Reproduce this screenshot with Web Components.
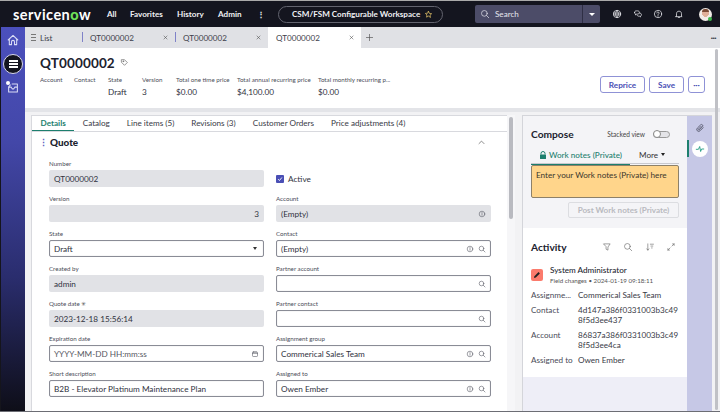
<!DOCTYPE html>
<html>
<head>
<meta charset="utf-8">
<style>
  html, body { margin: 0; padding: 0; width: 720px; height: 412px; overflow: hidden; background: #fff; }
  body { font-family: Lato, "Open Sans", sans-serif; color: #2b2d3a; }
</style>
</head>
<body>
<sn-app></sn-app>
<script>
const ICONS = {
  search: '<circle cx="7" cy="7" r="4.6"/><path d="M10.5 10.5 14 14"/>',
  info: '<circle cx="8" cy="8" r="5.6"/><path d="M8 7.4v3.2M8 5v.8"/>',
  cal: '<rect x="3" y="4" width="10" height="9" rx="1.5"/><path d="M3 6.8h10M6 3v2M10 3v2"/>',
  globe: '<circle cx="8" cy="8" r="5.8"/><path d="M2.4 6.5h11.2M2.4 9.5h11.2M8 2.2c-3 3.6-3 8 0 11.6M8 2.2c3 3.6 3 8 0 11.6"/>',
  chat: '<path d="M2.5 5.5c0-1.5 1-2.5 2.7-2.5h2.3c1.7 0 2.7 1 2.7 2.5S9.2 8 7.5 8H6L4 9.5V8C3 7.8 2.5 6.8 2.5 5.5Z"/><path d="M10.5 6.5c1.8 0 3 .9 3 2.6 0 1.2-.5 2-1.5 2.3v1.3L10.2 11.5H9c-1.3 0-2.3-.7-2.6-1.9"/>',
  help: '<circle cx="8" cy="8" r="5.8"/><path d="M6.2 6.4C6.3 5.3 7 4.8 8 4.8c1.1 0 1.8.7 1.8 1.6 0 1.5-1.8 1.4-1.8 3M8 10.8v.8"/>',
  bell: '<path d="M4 11.5V7.5c0-2.5 1.6-4 4-4s4 1.5 4 4v4l1 .7H3ZM6.8 13.5h2.4"/>',
  home: '<path d="M2.5 8 8 2.8 13.5 8M3.8 7v6.3H6.3V10c0-1 .7-1.600 1.700-1.600S9.700 9 9.700 10v3.300h2.500V7"/>',
  inbox: '<path d="M3 7h3l1 2h2l1-2h3M3 7v5.500h10V3.500H7"/><path d="M3 7 5 4.500"/>',
  tag: '<path d="M3 3h5l5 5-5 5-5-5Z"/><circle cx="5.800" cy="5.800" r=".8"/>',
  clip: '<path d="M13 7.500 8 12.500a3 3 0 0 1-4.300-4.300L9 3a2 2 0 0 1 2.900 2.900L6.800 11a.9.9 0 0 1-1.300-1.300L10 5.200"/>',
  filter: '<path d="M3 3h10L9.500 8v5l-3-1.500V8Z"/>',
  sort: '<path d="M4.500 3v10M2.800 11 4.500 13 6.200 11M8.500 3.500h5M9.500 6.500h3M10.500 9.500h1"/>',
  expand: '<path d="M9.500 6.500 13 3M10.500 3H13v2.500M6.500 9.500 3 13M3 10.500V13h2.500"/>',
  star: '<path d="m8 2.500 1.700 3.600 3.900.5-2.900 2.700.8 3.900L8 10.800l-3.500 1.900.8-3.900-2.900-2.700 3.900-.5Z"/>',
  chevUp: '<path d="M3.500 10 8 5.500 12.500 10"/>',
  plus: '<path d="M8 2.500v11M2.500 8h11"/>',
  close: '<path d="M4.500 4.500l7 7M11.500 4.500l-7 7"/>',
  pulse: '<path d="M2 8.500h3.500L7.500 4l1.500 8 1.500-4H14"/>'
};

function icon(name, size, color, sw) {
  return `<svg width="${size}" height="${size}" viewBox="0 0 16 16" fill="none" stroke="${color}" stroke-width="${sw || 1.2}" stroke-linecap="round" stroke-linejoin="round" style="display:block;flex:none">${ICONS[name]}</svg>`;
}

class SnTopbar extends HTMLElement {
  constructor() {
    super();
    this.attachShadow({mode: "open"}).innerHTML = `
      <style>
        :host { display: flex; align-items: center; height: 27px; background: #14151f; color: #f1f1f4; font-size: 8.100px; font-weight: 700; box-sizing: border-box; border-top: 1px solid #aaa; }
        .logo { margin-left: 13px; width: 94px; font-size: 14.500px; font-weight: 700; letter-spacing: .45px; color: #fff; }
        .logo b { color: #6ee05a; font-weight: 900; }
        nav { display: flex; width: 171px; }
        nav span:nth-child(1) { width: 23px; }
        nav span:nth-child(2) { width: 47px; }
        nav span:nth-child(3) { width: 41px; }
        nav span:nth-child(4) { width: 39px; }
        .pill { display: flex; align-items: center; box-sizing: border-box; width: 165px; height: 17px; padding-left: 13px; border: 1px solid #63646f; border-radius: 9px; font-size: 8.100px; margin-right: 32px; white-space: nowrap; }
        .pill svg { margin-left: 4px; }
        .search { display: flex; align-items: center; box-sizing: border-box; width: 125px; height: 18px; background: #4c4c68; border-radius: 2px; font-size: 8.100px; font-weight: 400; color: #e6e6ee; }
        .search .t { flex: 1; display: flex; align-items: center; gap: 5px; padding-left: 5px; }
        .search .c { width: 17px; height: 18px; border-left: 1px solid #2f2f45; display: flex; align-items: center; justify-content: center; }
        .caret { width: 0; height: 0; border: 3px solid transparent; border-top: 3.500px solid #fff; border-bottom: 0; }
        .icons { display: flex; align-items: center; margin-left: 12px; gap: 10.500px; }
        .avatar { position: relative; width: 13px; height: 13px; border-radius: 50%; margin-left: 5px; background: radial-gradient(circle at 50% 42%, #e0b09a 0 32%, #f1ece8 34% 100%); }
        .avatar::before { content: ""; position: absolute; left: 3px; top: 1px; width: 7px; height: 3px; border-radius: 3px 3px 0 0; background: #7a4a35; }
        .avatar::after { content: ""; position: absolute; right: 0; bottom: 0; width: 4px; height: 4px; border-radius: 50%; background: #3bb54a; }
      </style>
      <div class="logo">servicen<b>o</b>w</div>
      <nav><span>All</span><span>Favorites</span><span>History</span><span>Admin</span><span>&#8942;</span></nav>
      <div class="pill">CSM/FSM Configurable Workspace ${icon("star", 9, "#e5c46a", 1.300)}</div>
      <div class="search"><div class="t">${icon("search", 10, "#dcdce6")}Search</div><div class="c"><div class="caret"></div></div></div>
      <div class="icons">${icon("globe", 10, "#e8e8ee")}${icon("chat", 10, "#e8e8ee")}${icon("help", 10, "#e8e8ee")}${icon("bell", 10, "#e8e8ee")}<div class="avatar"></div></div>
    `;
  }
}

class SnSidebar extends HTMLElement {
  constructor() {
    super();
    this.attachShadow({mode: "open"}).innerHTML = `
      <style>
        :host { display: flex; flex-direction: column; align-items: center; width: 25px; flex: none; padding-top: 6px; box-sizing: border-box; background: linear-gradient(#4b50bd 0, #4347a8 30%, #2a2d6e 65%, #0e0e18 100%); border-left: 1px solid #15151c; }
        .list { width: 20px; height: 20px; margin: 7px 0; box-sizing: border-box; border-radius: 50%; background: #14151f; border: 1px solid #d8d8e8; display: flex; flex-direction: column; justify-content: center; align-items: center; gap: 1.500px; }
        .list i { display: block; width: 9px; height: 1.500px; background: #fff; }
        .inbox { position: relative; }
        .inbox::after { content: ""; position: absolute; left: 0; top: 0; width: 4px; height: 4px; border-radius: 50%; background: #fff; }
      </style>
      ${icon("home", 14, "#d9dbf5")}
      <div class="list"><i></i><i></i><i></i></div>
      <div class="inbox">${icon("inbox", 14, "#d9dbf5")}</div>
    `;
  }
}

class SnTabbar extends HTMLElement {
  constructor() {
    super();
    this.attachShadow({mode: "open"}).innerHTML = `
      <style>
        :host { display: flex; align-items: center; height: 21px; background: #e0e1e5; font-size: 8.100px; color: #3c3e4a; }
        .list { width: 57px; display: flex; align-items: center; gap: 4px; padding-left: 6px; box-sizing: border-box; }
        .bars { width: 5px; height: 5px; border-top: 1px solid #777; border-bottom: 1px solid #777; position: relative; }
        .bars::after { content: ""; position: absolute; left: 0; right: 0; top: 2px; height: 1px; background: #777; }
        .tab { width: 93px; height: 21px; display: flex; align-items: center; justify-content: space-between; box-sizing: border-box; padding: 0 6px 0 8px; position: relative; }
        .tab.div::before { content: ""; position: absolute; left: 0; top: 5px; bottom: 6px; width: 1px; background: #7f82c8; }
        .tab.on { background: #fff; }
        .plus { margin-left: 4px; }
        .more { margin-left: auto; margin-right: 4px; font-weight: 900; font-size: 8px; letter-spacing: -.5px; }
      </style>
      <div class="list"><span class="bars"></span>List</div>
      <div class="tab div">QT0000002 ${icon("close", 7, "#444")}</div>
      <div class="tab div">QT0000002 ${icon("close", 7, "#444")}</div>
      <div class="tab on">QT0000002 ${icon("close", 7, "#444")}</div>
      <div class="plus">${icon("plus", 9, "#555")}</div>
      <div class="more">&middot;&middot;&middot;</div>
    `;
  }
}

class SnMeta extends HTMLElement {
  constructor() {
    super();
    this.attachShadow({mode: "open"});
  }
  connectedCallback() {
    this.shadowRoot.innerHTML = `
      <style>
        :host { display: block; white-space: nowrap; }
        .l { font-size: 6.200px; line-height: 10px; color: #4a4c58; height: 10px; }
        .v { font-size: 8.200px; line-height: 12px; margin-top: 1px; height: 12px; color: #30323e; }
      </style>
      <div class="l">${this.getAttribute("label")}</div>
      <div class="v">${this.getAttribute("value") || ""}</div>
    `;
  }
}

class SnHeader extends HTMLElement {
  constructor() {
    super();
    this.attachShadow({mode: "open"}).innerHTML = `
      <style>
        :host { display: block; height: 60px; box-sizing: border-box; background: #fff; padding: 6px 15px 0 15px; }
        .title { display: flex; align-items: center; gap: 5px; height: 17px; font-size: 13.500px; font-weight: 700; color: #20222e; letter-spacing: .15px; }
        .row { display: flex; align-items: flex-start; margin-top: 4px; }
        .metas { display: grid; grid-template-columns: 34px 34px 34px 34px 61px 81px 80px; }
        .btns { margin-left: auto; margin-top: 1px; display: flex; gap: 4px; }
        button { font: 700 8.200px Lato, sans-serif; color: #4a4fb5; background: #fff; border: 1px solid #8f92d6; border-radius: 3px; height: 17px; padding: 0; }
      </style>
      <div class="title">QT0000002 ${icon("tag", 9, "#666")}</div>
      <div class="row">
        <div class="metas">
          <sn-meta label="Account"></sn-meta>
          <sn-meta label="Contact"></sn-meta>
          <sn-meta label="State" value="Draft"></sn-meta>
          <sn-meta label="Version" value="3"></sn-meta>
          <sn-meta label="Total one time price" value="$0.00"></sn-meta>
          <sn-meta label="Total annual recurring price" value="$4,100.00"></sn-meta>
          <sn-meta label="Total monthly recurring p..." value="$0.00"></sn-meta>
        </div>
        <div class="btns">
          <button style="width:45px">Reprice</button>
          <button style="width:35px">Save</button>
          <button style="width:17px">&middot;&middot;&middot;</button>
        </div>
      </div>
    `;
  }
}

class SnField extends HTMLElement {
  constructor() {
    super();
    this.attachShadow({mode: "open"});
  }
  connectedCallback() {
    const icons = (this.getAttribute("icons") || "").split(" ").filter(Boolean);
    const ro = this.hasAttribute("readonly");
    const req = this.hasAttribute("required");
    const muted = this.hasAttribute("muted");
    const select = this.hasAttribute("select");
    this.shadowRoot.innerHTML = `
      <style>
        :host { display: block; height: 35px; }
        .l { height: 12px; line-height: 12px; font-size: 6.200px; color: #4a4c58; }
        .i { display: flex; align-items: center; gap: 4px; box-sizing: border-box; height: 17px; padding: 0 4px; border-radius: 2px; font-size: 8.200px; color: #30323e; white-space: nowrap; }
        .i.ed { background: #fff; border: 1px solid #8a8c96; box-shadow: inset 0 0 1px #bbb; }
        .i.ro { background: #e1e2e6; padding: 0 5px; }
        .t { flex: 1; }
        .t.r { text-align: right; }
        .t.m { color: #565862; }
        .caret { width: 0; height: 0; border: 2.500px solid transparent; border-top: 3px solid #333; border-bottom: 0; margin-right: 2px; }
      </style>
      <div class="l">${this.getAttribute("label")}${req ? ' <span style="color:#555">&#10035;</span>' : ""}</div>
      <div class="i ${ro ? "ro" : "ed"}">
        <span class="t ${this.hasAttribute("right") ? "r" : ""} ${muted ? "m" : ""}">${this.getAttribute("value") || ""}</span>
        ${icons.map(n => icon(n, 8, "#5c5e68", 1.200)).join("")}
        ${select ? '<span class="caret"></span>' : ""}
      </div>
    `;
  }
}

class SnActive extends HTMLElement {
  constructor() {
    super();
    this.attachShadow({mode: "open"}).innerHTML = `
      <style>
        :host { display: flex; align-items: center; gap: 4px; height: 35px; padding-top: 7px; box-sizing: border-box; font-size: 8.200px; color: #30323e; }
        .b { width: 8px; height: 8px; background: #4a4fb5; border-radius: 1px; display: flex; align-items: center; justify-content: center; }
      </style>
      <span class="b"><svg width="6" height="6" viewBox="0 0 8 8" fill="none" stroke="#fff" stroke-width="1.200"><path d="M1.500 4.200 3.300 6 6.500 2"/></svg></span>
      <slot></slot>
    `;
  }
}

class SnDetails extends HTMLElement {
  constructor() {
    super();
    this.attachShadow({mode: "open"}).innerHTML = `
      <style>
        :host { display: flex; width: 484px; flex: none; margin-left: 6px; overflow: hidden; }
        .card { width: 476px; flex: none; background: #fff; box-sizing: border-box; border-left: 1px solid #d8d9de; }
        .tabs { display: flex; height: 17px; border-top: 1px solid #d8d9de; border-bottom: 1px solid #d8d9de; box-sizing: border-box; font-size: 8.150px; line-height: 15px; color: #383a46; background: #fff; }
        .tabs span { padding: 0 8.500px; white-space: nowrap; }
        .tabs .on { color: #1d7f6e; font-weight: 700; box-shadow: inset 0 -1px 0 #1d7f6e; }
        .h { display: flex; align-items: center; height: 20px; padding: 0 21px 0 7px; font-size: 9.900px; font-weight: 700; color: #20222e; }
        .dots { color: #5a5ec0; width: 11px; font-size: 9px; }
        .h b { flex: 1; }
        .grid { display: grid; grid-template-columns: 215px 215px; column-gap: 12px; padding: 6px 0 0 17px; }
        .sb { width: 8px; flex: none; background: #f6f6f8; }
        .sb i { display: block; width: 3.500px; height: 102px; margin: 2px 0 0 2px; background: #b9bac0; border-radius: 2px; }
      </style>
      <div class="card">
        <div class="tabs">
          <span class="on">Details</span><span>Catalog</span><span>Line items (5)</span><span>Revisions (3)</span><span>Customer Orders</span><span>Price adjustments (4)</span>
        </div>
        <div class="h"><span class="dots">&#8942;</span><b>Quote</b>${icon("chevUp", 9, "#555")}</div>
        <div class="grid">
          <sn-field label="Number" value="QT0000002" readonly></sn-field>
          <sn-active>Active</sn-active>
          <sn-field label="Version" value="3" readonly right></sn-field>
          <sn-field label="Account" value="(Empty)" readonly icons="info"></sn-field>
          <sn-field label="State" value="Draft" select></sn-field>
          <sn-field label="Contact" value="(Empty)" icons="info search"></sn-field>
          <sn-field label="Created by" value="admin" readonly></sn-field>
          <sn-field label="Partner account" icons="search"></sn-field>
          <sn-field label="Quote date" value="2023-12-18 15:56:14" readonly required></sn-field>
          <sn-field label="Partner contact" icons="search"></sn-field>
          <sn-field label="Expiration date" value="YYYY-MM-DD HH:mm:ss" muted icons="cal"></sn-field>
          <sn-field label="Assignment group" value="Commerical Sales Team" icons="info search"></sn-field>
          <sn-field label="Short description" value="B2B - Elevator Platinum Maintenance Plan"></sn-field>
          <sn-field label="Assigned to" value="Owen Ember" icons="info search"></sn-field>
        </div>
      </div>
      <div class="sb"><i></i></div>
    `;
  }
}

class SnCompose extends HTMLElement {
  constructor() {
    super();
    this.attachShadow({mode: "open"}).innerHTML = `
      <style>
        :host { display: block; height: 112px; box-sizing: border-box; background: #f4f4f7; padding: 10px 8px 0 8px; }
        .top { display: flex; align-items: center; height: 16px; }
        .top b { flex: 1; font-size: 10.200px; color: #20222e; }
        .sv { font-size: 6.600px; color: #444; margin-right: 8px; }
        .tg { width: 17px; height: 7px; box-sizing: border-box; border: 1px solid #999; border-radius: 4px; background: #e4e4e8; position: relative; margin-right: 9px; }
        .tg::after { content: ""; position: absolute; left: -1px; top: -1.500px; width: 8px; height: 8px; box-sizing: border-box; border-radius: 50%; background: #fff; border: 1px solid #888; }
        .tabs { display: flex; height: 18px; margin-top: 4px; border-bottom: 1px solid #c8c9cf; font-size: 8.150px; box-sizing: border-box; align-items: center; }
        .wn { width: 99px; height: 18px; box-sizing: border-box; display: flex; align-items: center; justify-content: center; gap: 2px; color: #1d7f6e; font-weight: 500; box-shadow: 0 1px 0 #1d7f6e; }
        .more { margin-left: 9px; display: flex; align-items: center; gap: 3px; color: #333; }
        .caret { width: 0; height: 0; border: 2.500px solid transparent; border-top: 3px solid #222; border-bottom: 0; }
        .ta { height: 33px; margin-top: 1px; box-sizing: border-box; background: #ffd58b; border: 1px solid #8d8068; border-radius: 2px; padding: 4px 4px; font-size: 8.200px; color: #3b372c; }
        .post { display: block; margin: 4px 0 0 auto; width: 111px; height: 16px; border: 1px solid #dcdde1; border-radius: 2px; background: #f4f4f7; color: #b9bac0; font: 700 8.100px Lato, sans-serif; padding: 0; }
      </style>
      <div class="top"><b>Compose</b><span class="sv">Stacked view</span><span class="tg"></span></div>
      <div class="tabs">
        <div class="wn"><svg width="8" height="8" viewBox="0 0 8 8"><path d="M2 3.500V2.500a2 2 0 0 1 4 0v1" fill="none" stroke="#1d7f6e"/><rect x="1" y="3.500" width="6" height="4.500" rx=".6" fill="#1d7f6e"/></svg>Work notes (Private)</div>
        <div class="more">More <span class="caret"></span></div>
      </div>
      <div class="ta">Enter your Work notes (Private) here</div>
      <button class="post">Post Work notes (Private)</button>
    `;
  }
}

class SnActivity extends HTMLElement {
  constructor() {
    super();
    this.attachShadow({mode: "open"}).innerHTML = `
      <style>
        :host { display: block; height: 149px; box-sizing: border-box; background: #fff; padding: 11px 8px 0 8px; font-size: 8.150px; color: #383a46; }
        .top { display: flex; align-items: center; height: 16px; }
        .top b { flex: 1; font-size: 10.200px; color: #20222e; }
        .top div { display: flex; gap: 11.500px; margin-right: 3px; }
        .who { display: flex; gap: 7px; margin-top: 14px; }
        .ava { width: 12px; height: 12px; border-radius: 2px; background: #fb7b6c; display: flex; align-items: center; justify-content: center; flex: none; }
        .name { font-weight: 500; line-height: 11px; margin-top: -4px; color: #24262f; }
        .sub { font-size: 6.200px; line-height: 10px; color: #555; white-space: nowrap; }
        .rows { display: grid; grid-template-columns: 47px 102px; row-gap: 4px; line-height: 10.500px; margin-top: 4px; }
        .rows span:nth-child(odd) { color: #4a4c58; white-space: nowrap; }
        .rows span:nth-child(even) { word-break: break-all; }
      </style>
      <div class="top"><b>Activity</b><div>${icon("filter", 10, "#666", 1)}${icon("search", 10, "#666", 1)}${icon("sort", 10, "#666", 1)}${icon("expand", 10, "#666", 1)}</div></div>
      <div class="who">
        <div class="ava"><svg width="8" height="8" viewBox="0 0 8 8"><path d="M1 7l.4-1.800L5.500 1.100 6.900 2.500 2.800 6.600Z" fill="#222"/></svg></div>
        <div><div class="name">System Administrator</div><div class="sub">Field changes &bull; 2024-01-19 09:18:11</div></div>
      </div>
      <div class="rows">
        <span>Assignme...</span><span>Commerical Sales Team</span>
        <span>Contact</span><span>4d147a386f0331003b3c498f5d3ee437</span>
        <span>Account</span><span>86837a386f0331003b3c498f5d3ee4ca</span>
        <span>Assigned to</span><span>Owen Ember</span>
      </div>
    `;
  }
}

class SnRail extends HTMLElement {
  constructor() {
    super();
    this.attachShadow({mode: "open"}).innerHTML = `
      <style>
        :host { display: flex; flex-direction: column; align-items: center; width: 25px; flex: none; background: #c6c8e6; padding-top: 7px; box-sizing: border-box; }
        .c { width: 16px; height: 16px; margin-top: 8px; border-radius: 50%; background: #fff; display: flex; align-items: center; justify-content: center; position: relative; }
        .c::before { content: ""; position: absolute; left: -4.500px; top: -1px; width: 1.500px; height: 17px; background: #1d7f6e; }
      </style>
      ${icon("clip", 10, "#55576a", 1.400)}
      <div class="c">${icon("pulse", 10, "#1d9a80", 1.400)}</div>
    `;
  }
}

class SnSide extends HTMLElement {
  constructor() {
    super();
    this.attachShadow({mode: "open"}).innerHTML = `
      <style>
        :host { display: flex; margin-left: 7px; width: 190px; flex: none; border-left: 1px solid #d4d5da; border-top: 1px solid #d4d5da; box-sizing: border-box; }
        .col { width: 164px; flex: none; background: #eeeef7; }
      </style>
      <div class="col"><sn-compose></sn-compose><sn-activity></sn-activity></div>
      <sn-rail></sn-rail>
    `;
  }
}

class SnApp extends HTMLElement {
  constructor() {
    super();
    this.attachShadow({mode: "open"}).innerHTML = `
      <style>
        :host { display: flex; flex-direction: column; width: 720px; height: 412px; overflow: hidden; border-bottom: 1px solid #6c6d74; box-sizing: border-box; }
        .body { display: flex; flex: 1; min-height: 0; }
        .main { flex: 1; min-width: 0; display: flex; flex-direction: column; position: relative; }
        .content { display: flex; flex: 1; min-height: 0; background: #f2f2f4; border-top: 4px solid #e3e4e8; padding-top: 3px; box-sizing: border-box; }
        .outer { position: absolute; right: 2px; top: 22px; width: 3.500px; height: 361px; background: #c0c1c6; border-radius: 2px; }
      </style>
      <sn-topbar></sn-topbar>
      <div class="body">
        <sn-sidebar></sn-sidebar>
        <div class="main">
          <sn-tabbar></sn-tabbar>
          <sn-header></sn-header>
          <div class="content"><sn-details></sn-details><sn-side></sn-side></div>
          <div class="outer"></div>
        </div>
      </div>
    `;
  }
}

customElements.define("sn-topbar", SnTopbar);
customElements.define("sn-sidebar", SnSidebar);
customElements.define("sn-tabbar", SnTabbar);
customElements.define("sn-meta", SnMeta);
customElements.define("sn-header", SnHeader);
customElements.define("sn-field", SnField);
customElements.define("sn-active", SnActive);
customElements.define("sn-details", SnDetails);
customElements.define("sn-compose", SnCompose);
customElements.define("sn-activity", SnActivity);
customElements.define("sn-rail", SnRail);
customElements.define("sn-side", SnSide);
customElements.define("sn-app", SnApp);
</script>
</body>
</html>
